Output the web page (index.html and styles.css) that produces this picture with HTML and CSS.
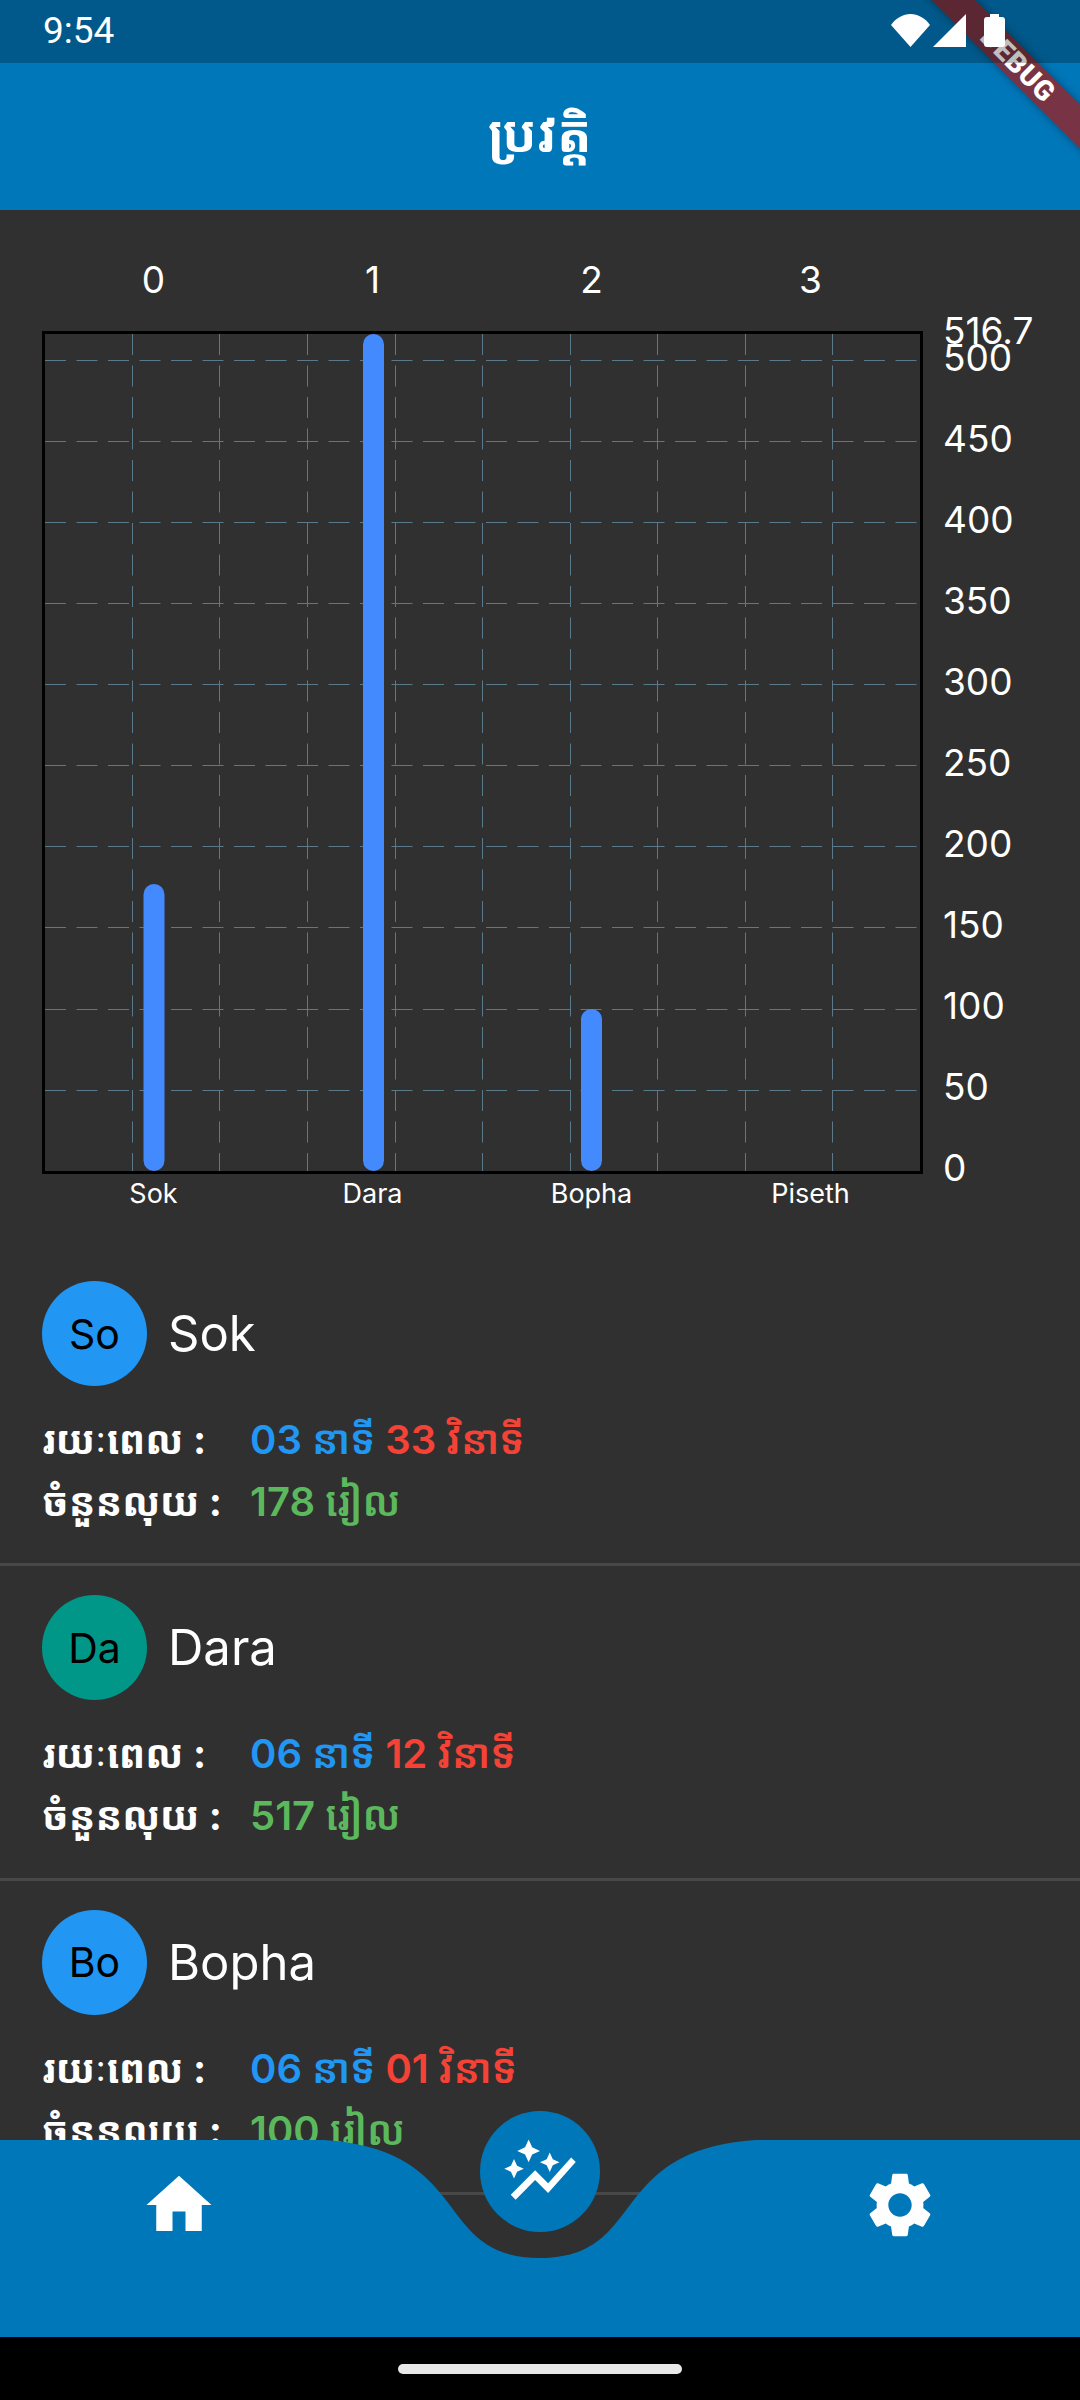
FILE: index.html
```html
<!DOCTYPE html>
<html lang="km">
<head>
<meta charset="utf-8">
<title>ប្រវត្តិ</title>
<link rel="stylesheet" href="styles.css">
</head>
<body>
<div class="screen">
  <header class="header">
    <div class="ribbon"><span class="ribbon-text">DEBUG</span></div>
    <div class="statusbar">
      <span class="time">9:54</span>
      <div class="status-icons">
        <svg class="ic-wifi" viewBox="0 0 39 33"><path d="M0 11C5 4 12 0 19.500 0S34 4 39 11L19.500 33z"/></svg>
        <svg class="ic-signal" viewBox="0 0 33 33"><path d="M33 0V33H0z"/></svg>
        <svg class="ic-battery" viewBox="0 0 21 33"><path d="M6 0H15V3H18Q21 3 21 6V30Q21 33 18 33H3Q0 33 0 30V6Q0 3 3 3H6z"/></svg>
      </div>
    </div>
    <div class="appbar"><h1 class="title">ប្រវត្តិ</h1></div>
  </header>

  <main class="main">
    <section class="chart">
      <div class="top-labels"><span>0</span><span>1</span><span>2</span><span>3</span></div>
      <div class="chart-row">
        <div class="plot">
          <svg class="plot-svg" viewBox="0 0 875 837">
            <g class="grid">
              <line x1="0" x2="875" y1="26.500" y2="26.500"/><line x1="0" x2="875" y1="107.500" y2="107.500"/>
              <line x1="0" x2="875" y1="188.500" y2="188.500"/><line x1="0" x2="875" y1="269.500" y2="269.500"/>
              <line x1="0" x2="875" y1="350.500" y2="350.500"/><line x1="0" x2="875" y1="431.500" y2="431.500"/>
              <line x1="0" x2="875" y1="512.500" y2="512.500"/><line x1="0" x2="875" y1="593.500" y2="593.500"/>
              <line x1="0" x2="875" y1="675.500" y2="675.500"/><line x1="0" x2="875" y1="756.500" y2="756.500"/>
              <line y1="0" y2="837" x1="87.500" x2="87.500"/><line y1="0" y2="837" x1="174.500" x2="174.500"/>
              <line y1="0" y2="837" x1="262.500" x2="262.500"/><line y1="0" y2="837" x1="350.500" x2="350.500"/>
              <line y1="0" y2="837" x1="437.500" x2="437.500"/><line y1="0" y2="837" x1="525.500" x2="525.500"/>
              <line y1="0" y2="837" x1="612.500" x2="612.500"/><line y1="0" y2="837" x1="700.500" x2="700.500"/>
              <line y1="0" y2="837" x1="787.500" x2="787.500"/>
            </g>
            <rect class="bar" x="98.500" y="550" width="21" height="287" rx="10.500"/>
            <rect class="bar" x="318" y="0" width="21" height="837" rx="10.500"/>
            <rect class="bar" x="536" y="675" width="21" height="162" rx="10.500"/>
          </svg>
        </div>
        <div class="y-axis">
          <span class="y-max">516.7</span>
          <span>500</span><span>450</span><span>400</span><span>350</span><span>300</span>
          <span>250</span><span>200</span><span>150</span><span>100</span><span>50</span><span>0</span>
        </div>
      </div>
      <div class="bottom-labels"><span>Sok</span><span>Dara</span><span>Bopha</span><span>Piseth</span></div>
    </section>

    <ul class="list">
      <li class="row">
        <div class="person"><div class="avatar avatar-blue">So</div><span class="name">Sok</span></div>
        <div class="line"><span class="key">រយៈពេល :</span><span class="val"><b class="blue">03 នាទី</b> <b class="red">33 វិនាទី</b></span></div>
        <div class="line"><span class="key">ចំនួនលុយ :</span><span class="val"><b class="green">178 រៀល</b></span></div>
      </li>
      <li class="row">
        <div class="person"><div class="avatar avatar-teal">Da</div><span class="name">Dara</span></div>
        <div class="line"><span class="key">រយៈពេល :</span><span class="val"><b class="blue">06 នាទី</b> <b class="red">12 វិនាទី</b></span></div>
        <div class="line"><span class="key">ចំនួនលុយ :</span><span class="val"><b class="green">517 រៀល</b></span></div>
      </li>
      <li class="row">
        <div class="person"><div class="avatar avatar-blue">Bo</div><span class="name">Bopha</span></div>
        <div class="line"><span class="key">រយៈពេល :</span><span class="val"><b class="blue">06 នាទី</b> <b class="red">01 វិនាទី</b></span></div>
        <div class="line"><span class="key">ចំនួនលុយ :</span><span class="val"><b class="green">100 រៀល</b></span></div>
      </li>
    </ul>
  </main>

  <nav class="nav">
    <svg class="nav-bg" viewBox="0 0 1080 197"><path d="M0 0H324C475 10 432 118 540 118C648 118 605 10 756 0H1080V197H0z"/></svg>
    <div class="nav-items">
      <svg class="nav-icon" viewBox="0 0 24 24"><path d="M10 20v-6h4v6h5v-8h3L12 3 2 12h3v8z"/></svg>
      <svg class="nav-icon" viewBox="0 0 24 24"><path d="M19.140 12.940c.04-.3.06-.61.06-.94 0-.32-.02-.64-.07-.94l2.030-1.580c.18-.14.23-.41.12-.61l-1.920-3.320c-.12-.22-.37-.29-.59-.22l-2.390.96c-.5-.38-1.030-.7-1.620-.94l-.36-2.540c-.04-.24-.24-.41-.48-.41h-3.840c-.24 0-.43.17-.47.41l-.36 2.540c-.59.24-1.130.57-1.620.94l-2.390-.96c-.22-.08-.47 0-.59.22L2.740 8.870c-.12.21-.08.47.12.61l2.030 1.580c-.05.3-.09.63-.09.94s.02.64.07.94l-2.030 1.580c-.18.14-.23.41-.12.61l1.920 3.320c.12.22.37.29.59.22l2.390-.96c.5.38 1.030.7 1.620.94l.36 2.540c.05.24.24.41.48.41h3.840c.24 0 .44-.17.47-.41l.36-2.540c.59-.24 1.130-.56 1.620-.94l2.390.96c.22.08.47 0 .59-.22l1.920-3.320c.12-.22.07-.47-.12-.61l-2.010-1.580zM12 15.600c-1.980 0-3.600-1.620-3.600-3.600s1.620-3.600 3.600-3.600 3.600 1.620 3.600 3.600-1.620 3.600-3.600 3.600z"/></svg>
    </div>
    <div class="fab">
      <svg class="nav-icon" viewBox="0 0 24 24"><path d="M14.060 9.940L12 9l2.060-.94L15 6l.94 2.060L18 9l-2.060.94L15 12zM4 14l.94-2.060L7 11l-2.060-.94L4 8l-.94 2.060L1 11l2.060.94zM8.500 9l1.090-2.410L12 5.500 9.590 4.410 8.500 2 7.410 4.410 5 5.500l2.410 1.090zM4.500 20.500l6-6.010 4 4L23 8.930l-1.410-1.410-7.090 7.970-4-4L3 19z"/></svg>
    </div>
  </nav>

  <div class="gesture"><span class="handle"></span></div>
</div>
</body>
</html>
```
FILE: styles.css
```css
* { box-sizing: border-box; }
html, body { margin: 0; padding: 0; background: #000; }
.screen {
  position: relative;
  width: 1080px;
  height: 2400px;
  display: flex;
  flex-direction: column;
  overflow: hidden;
  background: #303030;
  color: #fff;
  font-family: "Inter", "Noto Sans", "Noto Sans Khmer", "Khmer OS", "DejaVu Sans", sans-serif;
}

/* header */
.header { position: relative; flex: none; height: 210px; background: #0077b9; overflow: hidden; }
.statusbar {
  position: relative;
  height: 63px;
  display: flex;
  align-items: center;
  justify-content: space-between;
  padding: 0 75px 2px 43px;
  background: rgba(0, 0, 0, .25);
}
.time { font-family: Roboto, sans-serif; font-size: 37px; }
.status-icons { display: flex; align-items: center; }
.status-icons svg { display: block; fill: #fff; height: 33px; }
.ic-wifi { width: 39px; margin-right: 3px; }
.ic-signal { width: 33px; margin-right: 18px; }
.ic-battery { width: 21px; }
.appbar { height: 147px; display: flex; align-items: center; justify-content: center; padding-bottom: 6px; }
.title { margin: 0; font-size: 51px; font-weight: 700; line-height: 1; }
.ribbon {
  position: absolute;
  top: 49px;
  left: 898px;
  width: 240px;
  height: 31px;
  display: flex;
  align-items: center;
  justify-content: center;
  background: rgba(160, 30, 30, .75);
  box-shadow: 0 0 8px rgba(0, 0, 0, .35);
  transform: rotate(45deg);
}
.ribbon-text { font-family: Roboto, sans-serif; font-weight: 900; font-size: 28px; letter-spacing: .5px; }

/* chart */
.main { flex: 1; min-height: 0; overflow: hidden; }
.chart { padding: 46px 0 0 42px; }
.top-labels, .bottom-labels { display: grid; grid-template-columns: repeat(4, 219px); width: 881px; padding-left: 2px; text-align: center; }
.top-labels { height: 75px; font-size: 37px; line-height: 48px; }
.chart-row { display: flex; align-items: flex-start; height: 843px; }
.plot { flex: none; width: 881px; height: 843px; border: 3px solid #000; }
.plot-svg { display: block; width: 875px; height: 837px; }
.grid line { stroke: #5a7a8c; stroke-width: 1; stroke-dasharray: 21 10.500; }
.bar { fill: #448aff; }
.y-axis { position: relative; display: flex; flex-direction: column; margin: -14px 0 0 20px; font-size: 37px; }
.y-axis span { height: 81px; line-height: 81px; flex: none; }
.y-axis .y-max { position: absolute; top: -27px; left: 0; }
.bottom-labels { height: 66px; font-size: 27px; line-height: 40px; }

/* list */
.list { margin: 12px 0 0; padding: 0; list-style: none; }
.row { height: 314.300px; padding: 29px 42px 0; border-bottom: 3px solid #484848; }
.person { display: flex; align-items: center; gap: 21px; height: 105px; }
.avatar {
  flex: none;
  width: 105px;
  height: 105px;
  border-radius: 50%;
  display: flex;
  align-items: center;
  justify-content: center;
  color: #000;
  font-size: 41px;
}
.avatar-blue { background: #2196f3; }
.avatar-teal { background: #009688; }
.name { font-size: 49px; }
.line { display: flex; height: 62px; align-items: center; font-size: 39.500px; font-weight: 700; line-height: 62px; white-space: nowrap; }
.person + .line { margin-top: 23px; }
.key { flex: none; width: 208px; }
.val { font-size: 40px; font-weight: 600; }
.val b { font-weight: 600; }
.blue { color: #2196f3; }
.red { color: #f44336; }
.green { color: #5cb85c; }

/* bottom nav */
.nav { position: absolute; left: 0; right: 0; bottom: 63px; height: 197px; }
.nav-bg { position: absolute; inset: 0; display: block; width: 1080px; height: 197px; fill: #0077b9; }
.nav-items { position: relative; display: flex; justify-content: space-between; padding: 26px 141px 0 140px; }
.nav-icon { display: block; width: 78px; height: 78px; fill: #fff; }
.fab {
  position: absolute;
  left: 480px;
  top: -29px;
  width: 120px;
  height: 121px;
  border-radius: 50%;
  background: #0077b9;
  display: flex;
  align-items: center;
  justify-content: center;
}
.gesture { flex: none; height: 63px; background: #000; display: flex; justify-content: center; padding-top: 27px; }
.handle { width: 284px; height: 10px; border-radius: 5px; background: #e8e8e8; }
```
